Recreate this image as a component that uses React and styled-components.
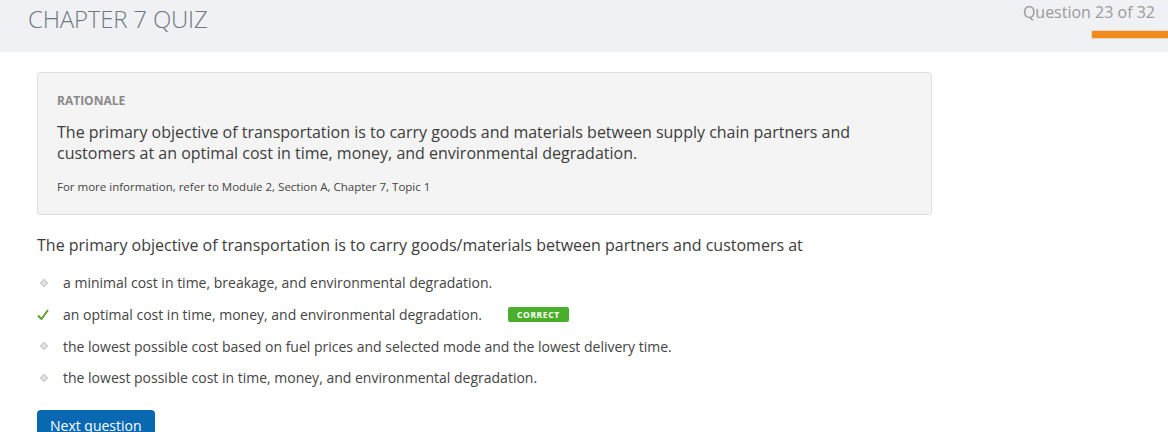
import React from 'react'
import styled, { createGlobalStyle } from 'styled-components'

const GlobalStyle = createGlobalStyle`
    body {
        margin: 0;
        background: #ffffff;
        font-family: "Open Sans", "Liberation Sans", sans-serif;
    }
`

const Header = styled.header`
    display: flex;
    justify-content: space-between;
    align-items: flex-start;
    height: 52px;
    background: #f0f1f5;
`

const Title = styled.h1`
    margin: 2px 0 0 28px;
    font-size: 24px;
    font-weight: 300;
    color: #6f7781;
    letter-spacing: -0.2px;
`

const Progress = styled.div`
    display: flex;
    flex-direction: column;
    align-items: flex-end;
    padding-top: 1px;
`

const Counter = styled.div`
    font-size: 16px;
    color: #9a9a9a;
    margin-right: 13px;
`

const Bar = styled.div`
    margin-top: 7px;
    width: 76px;
    height: 7px;
    background: #f38b1c;
    border: 1px solid #e3d9cc;
    border-right: none;
    border-radius: 2px 0 0 2px;
`

const Main = styled.main`
    padding: 20px 37px 0;
`

const Rationale = styled.section`
    width: 855px;
    padding: 19px 19px 20px;
    background: #f4f4f4;
    border: 1px solid #e0e0e0;
    border-radius: 3px;
`

const RationaleLabel = styled.div`
    font-size: 12px;
    font-weight: 700;
    color: #8a8a8a;
    margin-bottom: 13px;
`

const RationaleText = styled.p`
    margin: 0;
    font-size: 16px;
    line-height: 21px;
    color: #3c3c3c;
`

const Reference = styled.p`
    margin: 15px 0 0;
    font-size: 11.5px;
    color: #444;
`

const Question = styled.p`
    margin: 19px 0 11px;
    font-size: 16px;
    color: #3c3c3c;
`

const Options = styled.ul`
    list-style: none;
    margin: 0;
    padding: 0;
`

const Option = styled.li`
    display: flex;
    align-items: center;
    height: 31.7px;
    font-size: 14px;
    color: #444;
`

const Marker = styled.span`
    width: 26px;
    display: flex;
    justify-content: flex-start;
    padding-left: ${p => (p.$correct ? '0' : '4px')};
    box-sizing: border-box;
`

const Dot = styled.span`
    width: 4px;
    height: 4px;
    background: #e2e2e2;
    border: 1px solid #c8c8c8;
    transform: rotate(45deg);
`

const Badge = styled.span`
    margin-left: 26px;
    padding: 2px 9px;
    background: #4caf2b;
    border-radius: 2px;
    color: #fff;
    font-size: 8.5px;
    font-weight: 700;
    letter-spacing: 0.6px;
`

const NextButton = styled.button`
    margin-top: 16px;
    padding: 6px 13px 8px;
    background: #0868b1;
    border: none;
    border-radius: 4px;
    color: #fff;
    font-family: "Open Sans", "Liberation Sans", sans-serif;
    font-size: 14px;
`

const Check = () => (
    <svg width="12" height="11" viewBox="0 0 12 11">
        <path d="M1 6.5 L4.5 10 L11 1" fill="none" stroke="#5ba02e" strokeWidth="2" />
    </svg>
)

const options = [
    { text: 'a minimal cost in time, breakage, and environmental degradation.' },
    { text: 'an optimal cost in time, money, and environmental degradation.', correct: true },
    { text: 'the lowest possible cost based on fuel prices and selected mode and the lowest delivery time.' },
    { text: 'the lowest possible cost in time, money, and environmental degradation.' },
]

export default function App() {
    return (
        <>
            <GlobalStyle />
            <Header>
                <Title>CHAPTER 7 QUIZ</Title>
                <Progress>
                    <Counter>Question 23 of 32</Counter>
                    <Bar />
                </Progress>
            </Header>
            <Main>
                <Rationale>
                    <RationaleLabel>RATIONALE</RationaleLabel>
                    <RationaleText>
                        The primary objective of transportation is to carry goods and materials between supply chain partners and
                        customers at an optimal cost in time, money, and environmental degradation.
                    </RationaleText>
                    <Reference>For more information, refer to Module 2, Section A, Chapter 7, Topic 1</Reference>
                </Rationale>
                <Question>
                    The primary objective of transportation is to carry goods/materials between partners and customers at
                </Question>
                <Options>
                    {options.map(o => (
                        <Option key={o.text}>
                            <Marker $correct={o.correct}>{o.correct ? <Check /> : <Dot />}</Marker>
                            {o.text}
                            {o.correct && <Badge>CORRECT</Badge>}
                        </Option>
                    ))}
                </Options>
                <NextButton>Next question</NextButton>
            </Main>
        </>
    )
}
